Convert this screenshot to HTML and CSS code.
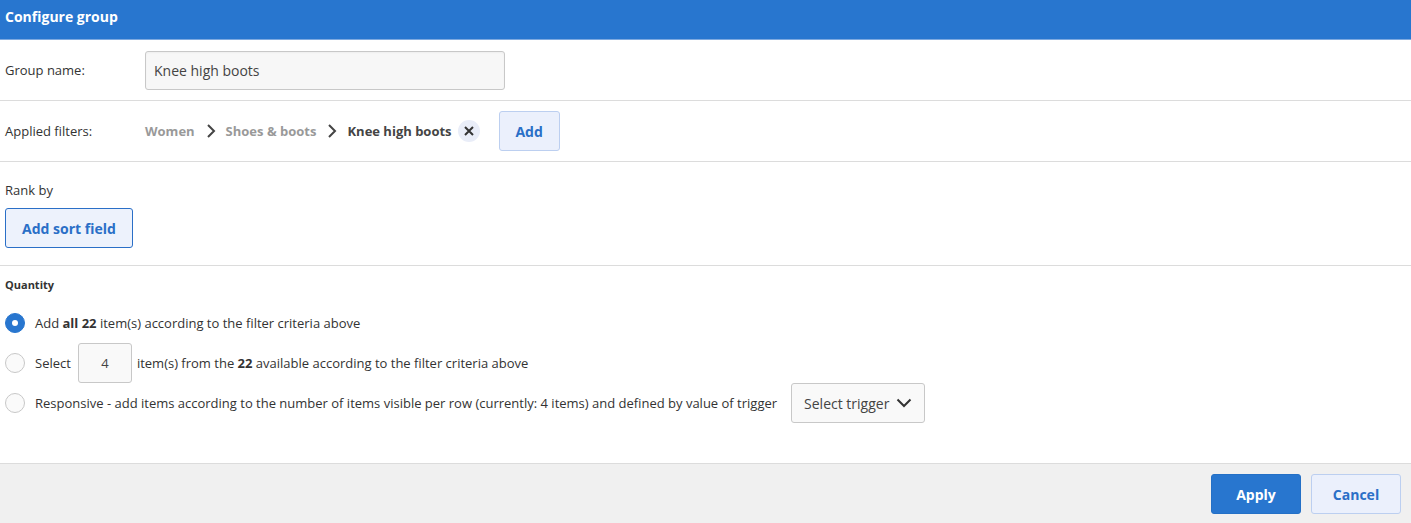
FILE: index.html
```html
<!DOCTYPE html>
<html>
<head>
<meta charset="utf-8">
<link rel="stylesheet" href="styles.css">
</head>
<body>
<div class="dialog">
  <div class="header">Configure group</div>
  <div class="row">
    <div class="label">Group name:</div>
    <input class="text-input" type="text" value="Knee high boots">
  </div>
  <div class="row">
    <div class="label">Applied filters:</div>
    <div class="crumbs">
      <span class="crumb muted">Women</span>
      <svg class="chev" width="10" height="16" viewBox="0 0 10 16"><path d="M2 2l6 6-6 6" fill="none" stroke="#444" stroke-width="2"/></svg>
      <span class="crumb muted">Shoes &amp; boots</span>
      <svg class="chev" width="10" height="16" viewBox="0 0 10 16"><path d="M2 2l6 6-6 6" fill="none" stroke="#444" stroke-width="2"/></svg>
      <span class="crumb">Knee high boots</span>
      <span class="remove"><svg width="10" height="10" viewBox="0 0 10 10"><path d="M1 1l8 8M9 1l-8 8" stroke="#333" stroke-width="2"/></svg></span>
    </div>
    <button class="btn-light add">Add</button>
  </div>
  <div class="rank">
    <div class="rank-label">Rank by</div>
    <button class="btn-outline">Add sort field</button>
  </div>
  <div class="quantity">
    <div class="q-title">Quantity</div>
    <div class="opt">
      <span class="radio checked"></span>
      <span>Add <b>all 22</b> item(s) according to the filter criteria above</span>
    </div>
    <div class="opt">
      <span class="radio"></span>
      <span>Select</span>
      <input class="num-input" type="text" value="4">
      <span>item(s) from the <b>22</b> available according to the filter criteria above</span>
    </div>
    <div class="opt">
      <span class="radio"></span>
      <span>Responsive - add items according to the number of items visible per row (currently: 4 items) and defined by value of trigger</span>
      <div class="select">Select trigger <svg width="16" height="10" viewBox="0 0 16 10"><path d="M1.5 1.5l6.5 6.5 6.5-6.5" fill="none" stroke="#333" stroke-width="2"/></svg></div>
    </div>
  </div>
  <div class="footer">
    <button class="btn-primary">Apply</button>
    <button class="btn-light cancel">Cancel</button>
  </div>
</div>
</body>
</html>
```
FILE: styles.css
```css
* { box-sizing: border-box; }
html, body { margin: 0; padding: 0; background: #fff; }
body { font-family: "Open Sans", "Noto Sans", sans-serif; font-size: 13px; color: #333; }
.dialog { width: 1411px; height: 523px; display: flex; flex-direction: column; }
.header { height: 40px; background: #2876cf; border-bottom: 1px solid #7ea9df; color: #fff; font-weight: 700; font-size: 14px; padding: 0 5px 6px; display: flex; align-items: center; }
.row { height: 61px; border-bottom: 1px solid #dcdcdc; display: flex; align-items: center; padding-left: 5px; }
.label { width: 140px; }
.text-input { width: 360px; height: 39px; border: 1px solid #c8c8c8; border-radius: 3px; background: #f7f7f7; font-family: inherit; font-size: 14px; color: #444; padding: 0 8px; box-shadow: inset 0 1px 2px rgba(0,0,0,0.04); }
.crumbs { display: flex; align-items: center; font-weight: 700; color: #444; }
.crumb.muted { color: #999; }
.chev { margin: 0 10px 0 11px; }
.remove { width: 22px; height: 22px; border-radius: 50%; background: #e9edf8; display: inline-flex; align-items: center; justify-content: center; margin-left: 6px; }
button { font-family: inherit; cursor: pointer; }
.btn-light { background: #ebf0fc; border: 1px solid #bccff0; border-radius: 3px; color: #2a6fc7; font-weight: 700; font-size: 14px; }
.add { margin-left: 19px; width: 61px; height: 40px; }
.rank { height: 104px; border-bottom: 1px solid #dcdcdc; padding: 19px 5px 0; }
.rank-label { line-height: 18px; }
.btn-outline { margin-top: 9px; width: 128px; height: 40px; background: #edf2fc; border: 1px solid #2a6fc7; border-radius: 3px; color: #2a6fc7; font-weight: 700; font-size: 14px; padding-bottom: 1px; }
.quantity { flex: 1; padding: 11px 5px 0; border-bottom: 1px solid #dcdcdc; }
.q-title { font-weight: 700; font-size: 11px; line-height: 16px; margin-bottom: 10px; }
.opt { display: flex; align-items: center; height: 40px; }
.radio { width: 20px; height: 20px; border-radius: 50%; border: 1px solid #c8c8c8; background: #fafafa; margin-right: 10px; flex: none; }
.radio.checked { background: #2876cf; border-color: #2876cf; position: relative; }
.radio.checked::after { content: ""; position: absolute; left: 6px; top: 6px; width: 6px; height: 6px; border-radius: 50%; background: #fff; }
.num-input { width: 54px; height: 40px; margin: 0 5px 0 7px; border: 1px solid #c8c8c8; border-radius: 3px; background: #f9f9f9; text-align: center; font-family: inherit; font-size: 13px; color: #444; }
.select { margin-left: 14px; width: 134px; height: 40px; border: 1px solid #c8c8c8; border-radius: 3px; background: #f9f9f9; display: flex; align-items: center; padding-left: 12px; gap: 7px; font-size: 14px; color: #444; }
.footer { height: 59px; background: #f0f0f0; display: flex; justify-content: flex-end; align-items: center; gap: 10px; padding-right: 10px; padding-top: 1px; }
.btn-primary { width: 90px; height: 40px; background: #2876cf; border: 1px solid #2470c6; border-radius: 3px; color: #fff; font-weight: 700; font-size: 14px; }
.cancel { width: 90px; height: 40px; }
```
